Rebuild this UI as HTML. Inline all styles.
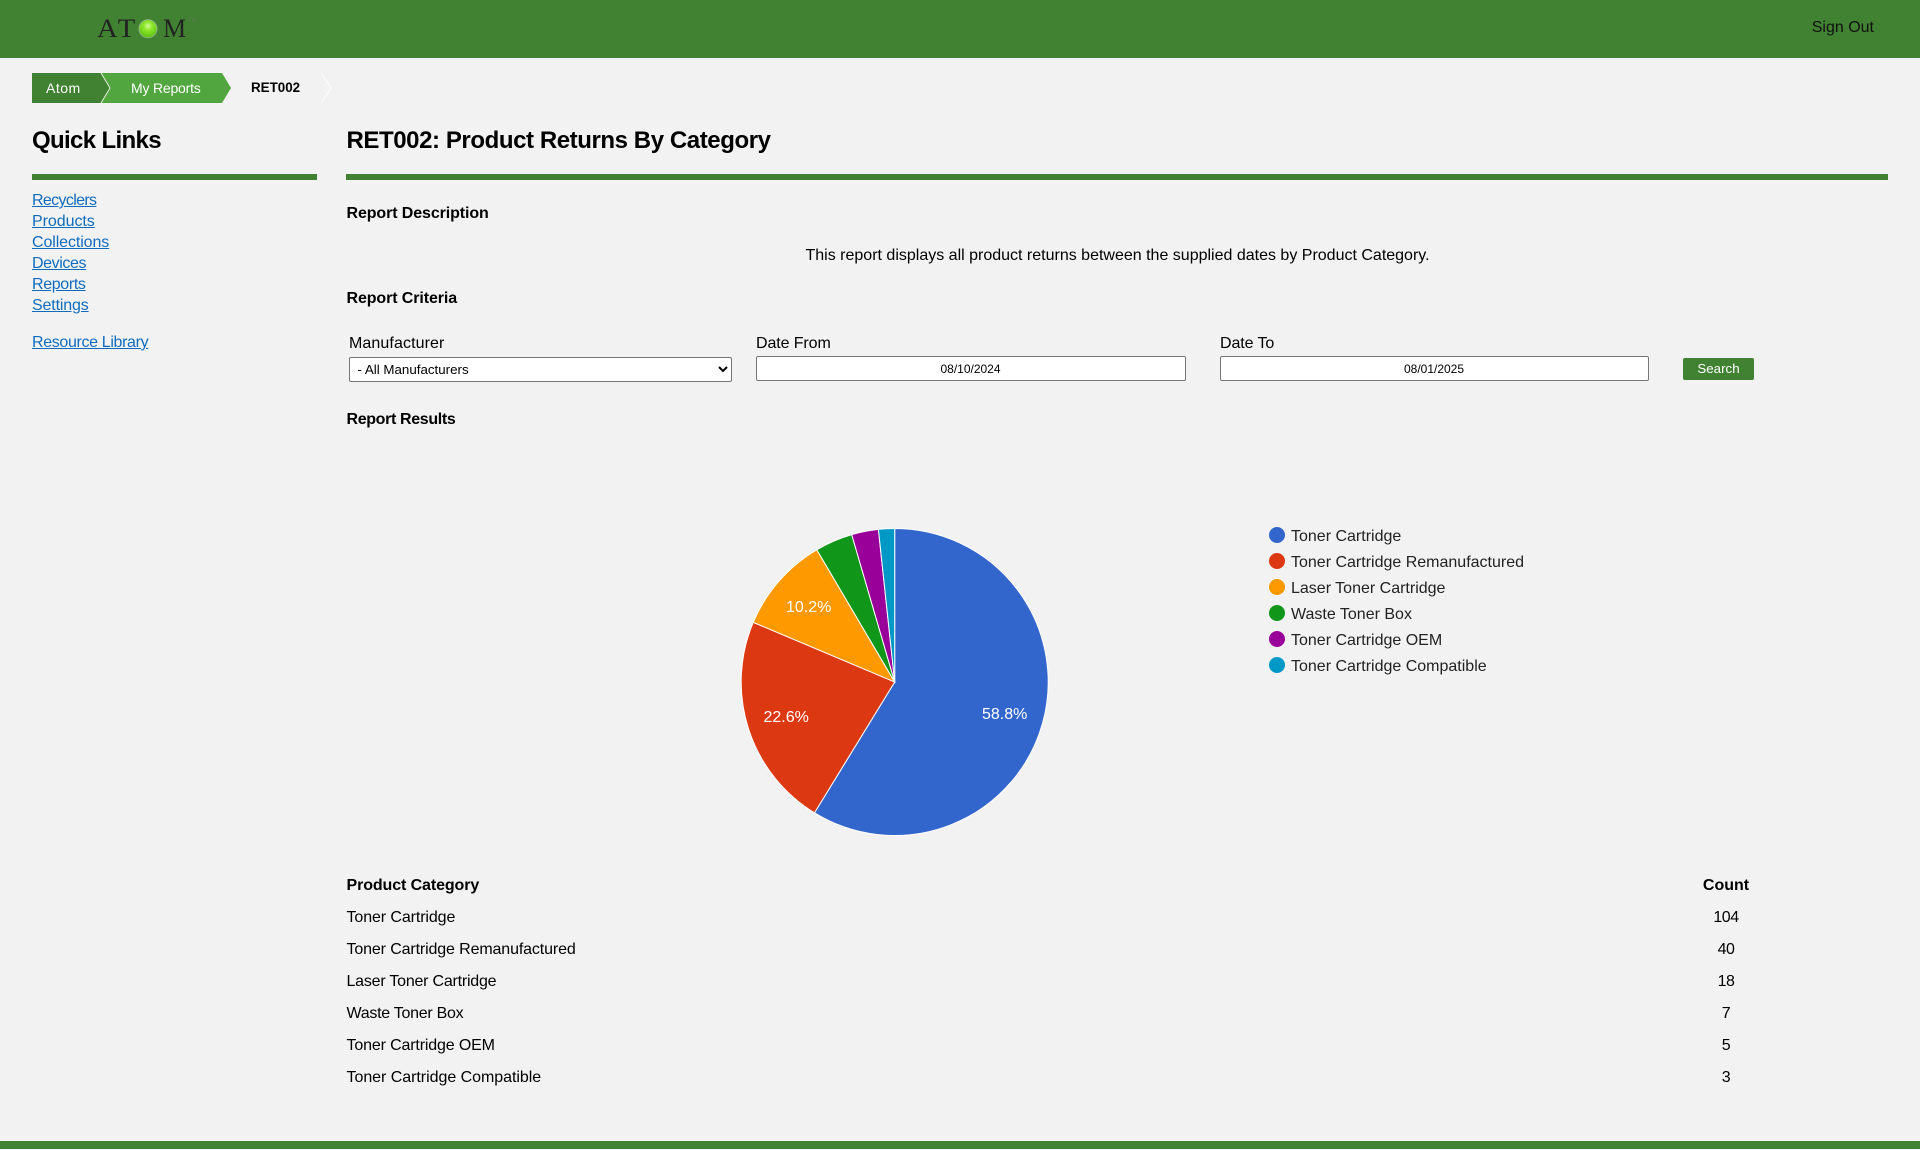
<!DOCTYPE html>
<html lang="en">
<head>
<meta charset="utf-8">
<title>RET002: Product Returns By Category</title>
<style>
html,body{margin:0;padding:0;width:1920px;height:1150px;overflow:hidden;background:#f2f2f2}
body{position:relative;font-family:"Liberation Sans",Arial,sans-serif;font-size:16px;color:#000}
.t{position:absolute;white-space:nowrap;line-height:24px;height:24px}
.b{font-weight:bold}
a{color:#0f6cbd;text-decoration:underline}
.rule{position:absolute;background:#418132}
.in{position:absolute;box-sizing:border-box;border:1px solid #767676;border-radius:2px;background:#fff;font:12px "Liberation Sans",Arial,sans-serif;color:#000;text-align:center;padding:0 1px 0 0;margin:0}
</style>
</head>
<body>
<div class="rule" style="left:0;top:0;width:1920px;height:58px"></div>
<span style="position:absolute;left:97px;top:14px;font:26px/30px 'Liberation Serif',serif;color:#222;letter-spacing:3px;transform:scaleX(1.1);transform-origin:left">AT</span>
<svg style="position:absolute;left:0;top:0" width="1920" height="110">
<defs><radialGradient id="g" cx=".5" cy=".35" r=".65"><stop offset="0" stop-color="#d8f8a0"/><stop offset=".35" stop-color="#8fe82c"/><stop offset="1" stop-color="#5cc010"/></radialGradient></defs>
<circle cx="148" cy="28.7" r="9" fill="url(#g)" stroke="#8fb583" stroke-width="1"/>
<polygon points="32,73 101,73 110,88 101,103 32,103" fill="#418132"/>
<polygon points="101,73 222,73 231,88 222,103 101,103 110,88" fill="#52a63f"/>
<polyline points="101,73 110,88 101,103" fill="none" stroke="#e6efe2" stroke-width="1"/>
<polyline points="321,73 331,88 321,103" fill="none" stroke="#fff" stroke-width="1"/>
</svg>
<span style="position:absolute;left:163px;top:14px;font:26px/30px 'Liberation Serif',serif;color:#222">M</span>
<span style="position:absolute;left:188px;top:17px;font:6px/8px 'Liberation Sans',sans-serif;color:#5d7d54">TM</span>
<span class="t" style="right:46px;top:16px;color:#111;font-size:16px">Sign Out</span>
<span class="t" style="left:46px;top:76px;color:#fff;font-size:14px;letter-spacing:.5px">Atom</span>
<span class="t" style="left:131px;top:76px;color:#fff;font-size:14px;letter-spacing:-.2px">My Reports</span>
<span class="t b" style="left:251px;top:76px;font-size:13.4px">RET002</span>

<span class="t b" style="left:32px;top:128.5px;font-size:24px;letter-spacing:-.65px">Quick Links</span>
<div class="rule" style="left:32px;top:174px;width:285px;height:6px"></div>
<a class="t" style="left:32px;top:189px;letter-spacing:-.65px" href="#">Recyclers</a>
<a class="t" style="left:32px;top:210px;letter-spacing:-.05px" href="#">Products</a>
<a class="t" style="left:32px;top:231px;letter-spacing:-.1px" href="#">Collections</a>
<a class="t" style="left:32px;top:252px;letter-spacing:-.4px" href="#">Devices</a>
<a class="t" style="left:32px;top:273px;letter-spacing:-.35px" href="#">Reports</a>
<a class="t" style="left:32px;top:294px;letter-spacing:-.15px" href="#">Settings</a>
<a class="t" style="left:32px;top:331px;letter-spacing:-.35px" href="#">Resource Library</a>

<span class="t b" style="left:346.5px;top:128.5px;font-size:24px;letter-spacing:-.42px">RET002: Product Returns By Category</span>
<div class="rule" style="left:346px;top:174px;width:1542px;height:6px"></div>
<span class="t b" style="left:346.5px;top:202px;letter-spacing:-.1px">Report Description</span>
<span class="t" style="left:805.5px;top:243.5px">This report displays all product returns between the supplied dates by Product Category.</span>
<span class="t b" style="left:346.5px;top:287px;letter-spacing:-.1px">Report Criteria</span>
<span class="t" style="left:349px;top:332px;letter-spacing:.1px">Manufacturer</span>
<span class="t" style="left:756px;top:332px;letter-spacing:-.1px">Date From</span>
<span class="t" style="left:1220px;top:332px;letter-spacing:-.1px">Date To</span>
<select class="in" style="left:349px;top:357px;width:383px;height:25px;text-align:left;padding-left:3.5px;font-size:13.33px"><option>- All Manufacturers</option></select>
<input class="in" style="left:756px;top:356px;width:430px;height:25px" value="08/10/2024">
<input class="in" style="left:1220px;top:356px;width:429px;height:25px" value="08/01/2025">
<div style="position:absolute;left:1683px;top:358px;width:71px;height:22px;background:#418132;border-radius:2px;color:#fff;font-size:13.33px;line-height:22px;text-align:center">Search</div>
<span class="t b" style="left:346.5px;top:407.5px;letter-spacing:-.35px">Report Results</span>

<svg style="position:absolute;left:700px;top:500px" width="900" height="360" viewBox="700 500 900 360">
<g stroke="#fff" stroke-width="1">
<path d="M894.7 682 L894.7 528.5 A153.5 153.5 0 1 1 814.45 812.85 Z" fill="#3366cc"/>
<path d="M894.7 682 L814.45 812.85 A153.5 153.5 0 0 1 753.27 622.3 Z" fill="#dc3912"/>
<path d="M894.7 682 L753.27 622.3 A153.5 153.5 0 0 1 816.8 549.8 Z" fill="#ff9900"/>
<path d="M894.7 682 L816.8 549.8 A153.5 153.5 0 0 1 851.7 534.65 Z" fill="#109618"/>
<path d="M894.7 682 L851.7 534.65 A153.5 153.5 0 0 1 878.4 529.4 Z" fill="#990099"/>
<path d="M894.7 682 L878.4 529.4 A153.5 153.5 0 0 1 894.7 528.5 Z" fill="#0099c6"/>
</g>
<g font-family="'Liberation Sans',Arial,sans-serif" font-size="16" fill="#fff">
<text x="982" y="719">58.8%</text>
<text x="763.5" y="722">22.6%</text>
<text x="786" y="612">10.2%</text>
</g>
<g>
<circle cx="1277" cy="535" r="8" fill="#3366cc"/>
<circle cx="1277" cy="561" r="8" fill="#dc3912"/>
<circle cx="1277" cy="587" r="8" fill="#ff9900"/>
<circle cx="1277" cy="613" r="8" fill="#109618"/>
<circle cx="1277" cy="639" r="8" fill="#990099"/>
<circle cx="1277" cy="665" r="8" fill="#0099c6"/>
</g>
<g font-family="'Liberation Sans',Arial,sans-serif" font-size="16" fill="#222">
<text x="1291" y="541">Toner Cartridge</text>
<text x="1291" y="567">Toner Cartridge Remanufactured</text>
<text x="1291" y="593">Laser Toner Cartridge</text>
<text x="1291" y="619">Waste Toner Box</text>
<text x="1291" y="645">Toner Cartridge OEM</text>
<text x="1291" y="671">Toner Cartridge Compatible</text>
</g>
</svg>

<span class="t b" style="left:346.5px;top:874px;letter-spacing:-.1px">Product Category</span>
<span class="t" style="left:346.5px;top:906px;letter-spacing:-.1px">Toner Cartridge</span>
<span class="t" style="left:346.5px;top:938px;letter-spacing:-.13px">Toner Cartridge Remanufactured</span>
<span class="t" style="left:346.5px;top:970px;letter-spacing:-.22px">Laser Toner Cartridge</span>
<span class="t" style="left:346.5px;top:1002px;letter-spacing:-.27px">Waste Toner Box</span>
<span class="t" style="left:346.5px;top:1034px;letter-spacing:-.15px">Toner Cartridge OEM</span>
<span class="t" style="left:346.5px;top:1066px;letter-spacing:-.04px">Toner Cartridge Compatible</span>
<div style="position:absolute;left:1666px;top:874px;width:120px;text-align:center;line-height:24px;font-weight:bold">Count</div>
<div style="position:absolute;left:1666px;top:906px;width:120px;text-align:center;line-height:32px;margin-top:-4px;letter-spacing:-.5px">104<br>40<br>18<br>7<br>5<br>3</div>
<div class="rule" style="left:0;top:1141px;width:1920px;height:8px"></div>
</body>
</html>
